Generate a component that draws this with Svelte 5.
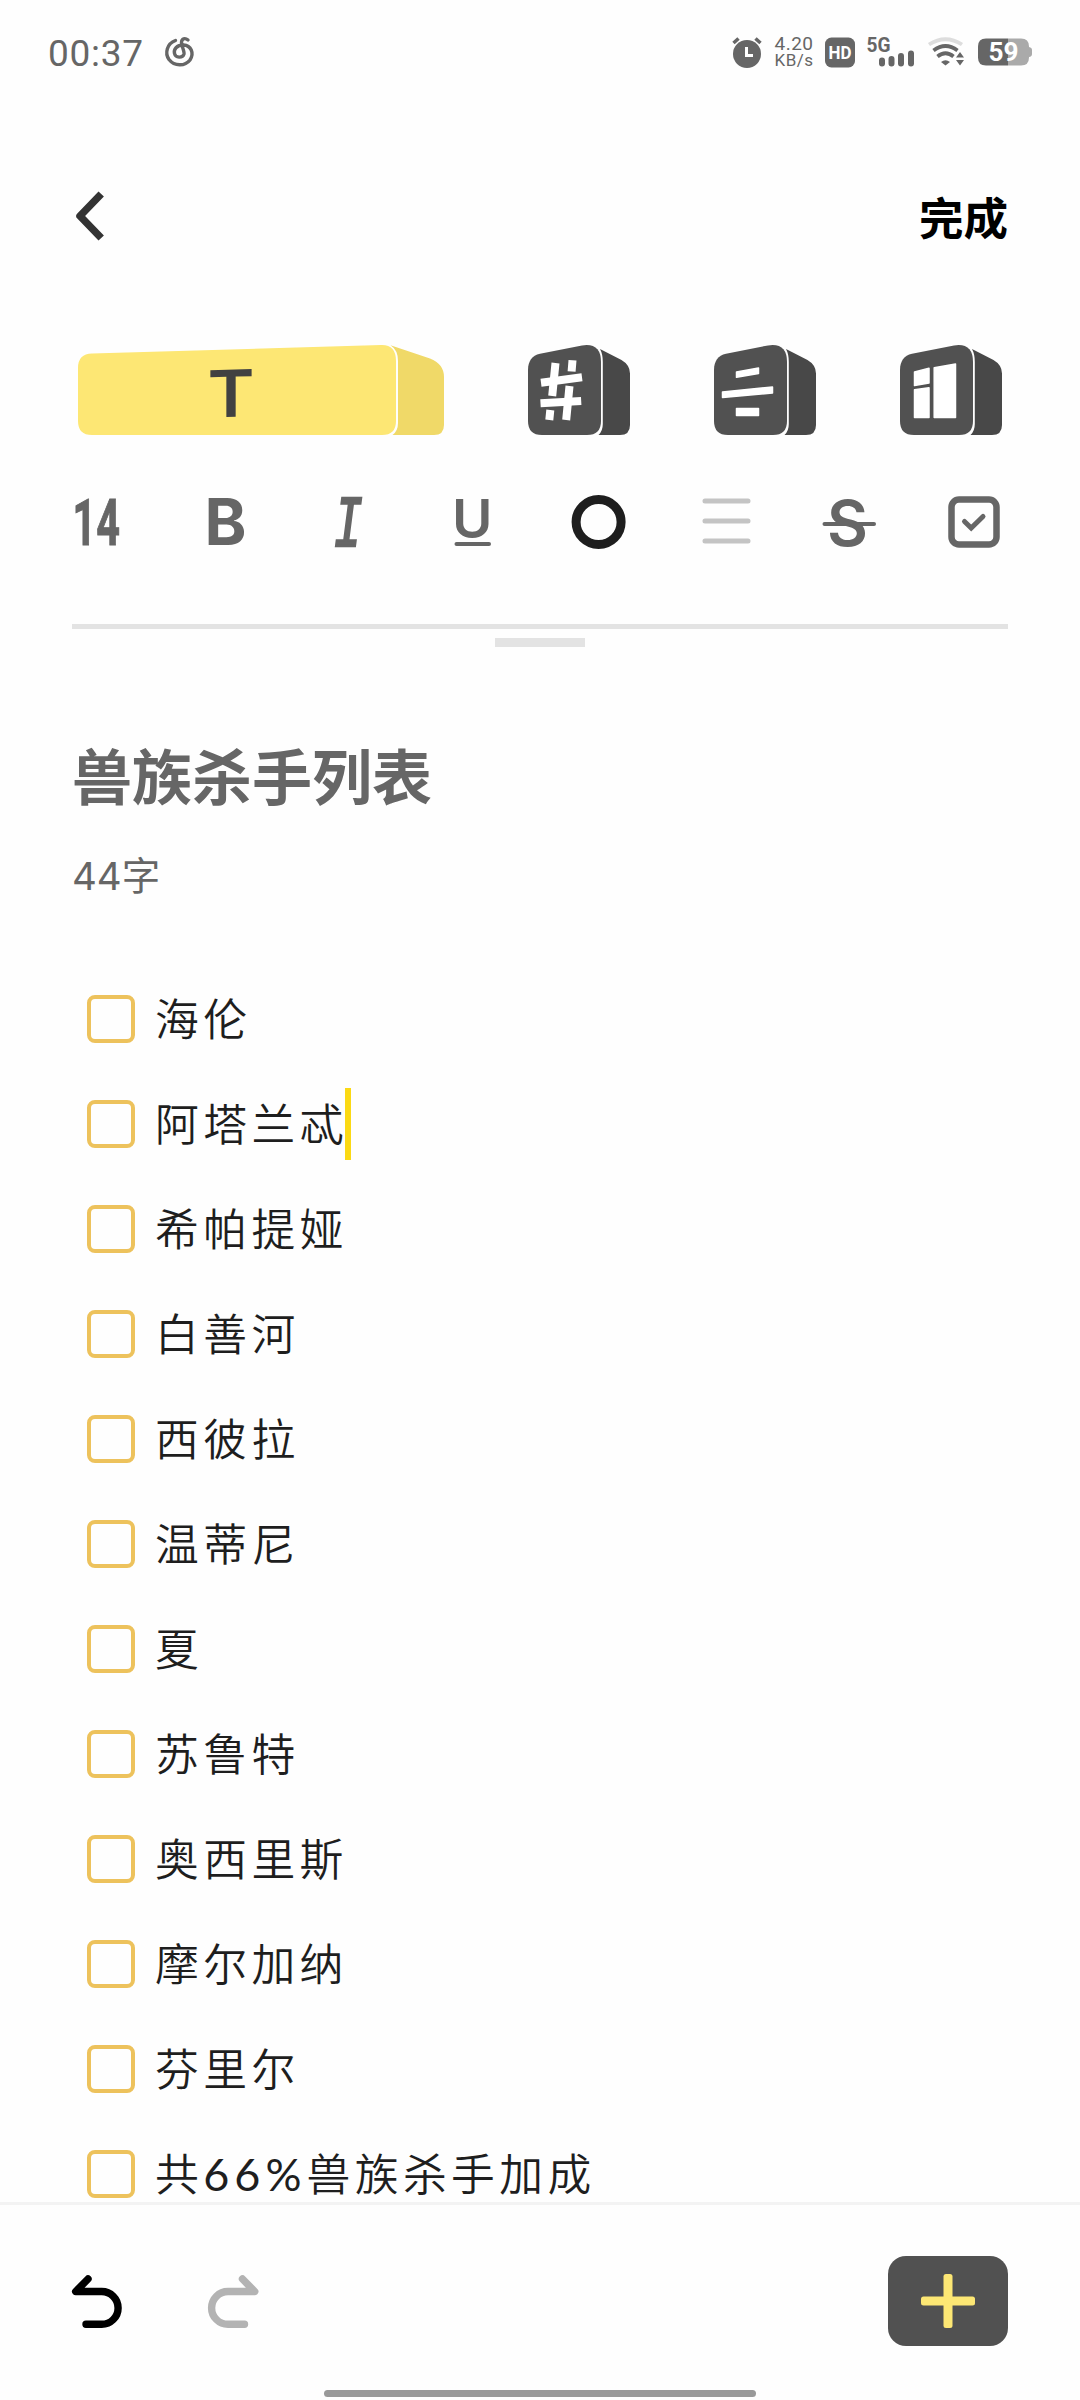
<script lang="ts">
  type Item = { text: string; done: boolean };

  const title = '兽族杀手列表';
  const wordCount = 44;
  const cursorAt = 1;

  let items: Item[] = $state(
    [
      '海伦', '阿塔兰忒', '希帕提娅', '白善河', '西彼拉', '温蒂尼',
      '夏', '苏鲁特', '奥西里斯', '摩尔加纳', '芬里尔', '共66%兽族杀手加成'
    ].map((text) => ({ text, done: false }))
  );

  function toggle(i: number) {
    items[i].done = !items[i].done;
  }

  // numbers are set in their own face, so cut them out of the text
  function parts(text: string) {
    return text.split(/([\d%]+)/).filter(Boolean);
  }
</script>

{#snippet cube()}
  <path class="face" d="M0 26Q0 12.5 12 9.7L54 1.4Q73 -1.5 73 18V77Q73 91 59 91H14Q0 91 0 77Z" />
  <path class="side" d="M72 5L93.500 16Q102 21 102 29.500V81Q102 91 92 91H70.500Q74.800 87 74.800 80V18Q74.800 10 72 5Z" />
{/snippet}

<div class="screen">
  <div class="status">
    <span class="clock">00:37</span>
    <svg class="music" width="30" height="32" viewBox="0 0 30 32">
      <path d="M10.500 4.500C2 7.500 -0.500 17 4 23.500C9.500 30.500 20 30.500 25 24C29.500 17 26 9.500 18.500 9C11.500 9 8.500 13.500 9.500 17.500C10.500 22 17.500 22.500 19 18C19.600 15.500 16.500 10 16.500 6.500C16.500 2.500 20 1.500 23 4" />
    </svg>
    <svg class="alarm" width="30" height="31" viewBox="0 0 30 31">
      <circle cx="15" cy="17" r="14" fill="#666" />
      <path d="M1.500 6L6.500 1.500M28.500 6L23.500 1.500" stroke="#666" stroke-width="3.500" />
      <path d="M14.500 10V18.500H21" fill="none" stroke="#fff" stroke-width="3" />
    </svg>
    <div class="speed"><span>4.20</span><span class="unit">KB/s</span></div>
    <svg class="hd" width="30" height="31" viewBox="0 0 30 31">
      <rect width="30" height="30" y="0.500" rx="6.500" fill="#666" />
      <text x="3.500" y="22" textLength="23" lengthAdjust="spacingAndGlyphs">HD</text>
    </svg>
    <svg class="signal" width="48" height="32" viewBox="0 0 48 32">
      <text x="-0.500" y="15.500" textLength="24" lengthAdjust="spacingAndGlyphs">5G</text>
      <path d="M15 24.500V27.500M24.500 23V27.500M34 20V27.500M44 17.500V27.500" />
    </svg>
    <svg class="wifi" width="37" height="30" viewBox="0 0 37 30">
      <path d="M1 7.500Q17.500 -3 34 7.500" stroke="#ddd" />
      <path d="M5.500 13.500Q17.500 4.500 29.500 13.500" />
      <path d="M9.500 19.500Q17.500 13 25.500 19.500" />
      <path d="M13 25Q17.500 21.500 22 25L17.500 28.500Z" fill="#666" stroke="none" />
      <path d="M32 15L36 20.500H28ZM32 28.500L36 23H28Z" fill="#666" stroke="none" />
    </svg>
    <svg class="battery" width="54" height="28" viewBox="0 0 54 28">
      <path d="M8 0.500H30V27.500H8Q0 27.500 0 19.500V8.500Q0 0.500 8 0.500Z" fill="#666" />
      <path d="M30 0.500H43Q51 0.500 51 8.500V9Q54 9.500 54 12V16Q54 18.500 51 19V19.500Q51 27.500 43 27.500H30Z" fill="#aaa" />
      <text x="10.500" y="23" textLength="30" lengthAdjust="spacingAndGlyphs">59</text>
    </svg>
  </div>

  <header class="header">
    <button class="plain" aria-label="back">
      <svg width="36" height="52" viewBox="0 0 36 52">
        <path d="M29.200 4L8 26L29.200 48" fill="none" stroke="#333" stroke-width="7.500" stroke-linejoin="round" />
      </svg>
    </button>
    <button class="plain finish">完成</button>
  </header>

  <nav class="tabs">
    <svg class="tab wide" width="366" height="92" viewBox="0 0 366 92">
      <path class="face" d="M0 24Q0 10 14 9.600L303 1.100Q318 0.500 318 17V77Q318 91 304 91H14Q0 91 0 77Z" />
      <path class="side" d="M312.500 1.300L352 14.500Q366 20 366 33V81Q366 91 356 91H314.500Q320 87 320 79V17Q320 6 312.500 1.300Z" />
      <text x="129.500" y="73" textLength="47" lengthAdjust="spacingAndGlyphs" transform="skewY(-1.500)" transform-origin="153 73">T</text>
    </svg>
    <svg class="tab" width="102" height="92" viewBox="0 0 102 92">
      {@render cube()}
      <path class="hash" d="M27.500 19L24.200 52M44.500 16.300L43.600 27.500M41.500 42L38.200 76M22.300 66L21.300 76" />
      <path class="hash" d="M13 38.700L54 33.300M12.500 59.300L53.200 57" />
    </svg>
    <svg class="tab" width="102" height="92" viewBox="0 0 102 92">
      {@render cube()}
      <path class="glyph" d="M22.500 28L44.500 24V29.500L22.500 33.300ZM8.500 48L58.500 43V49L8.500 53.500ZM22.500 64.500H44.500V71.500H22.500Z" />
    </svg>
    <svg class="tab" width="102" height="92" viewBox="0 0 102 92">
      {@render cube()}
      <path class="glyph" d="M14.500 28L29 24.300V39L14.500 41.500ZM14.500 45.800L29 43.800V73.500H14.500ZM34.200 23.800L55.500 20V73.500H34.200Z" />
    </svg>
  </nav>

  <div class="formats">
    <svg viewBox="0 0 60 60">
      <text class="size" x="3.500" y="53" textLength="47.500" lengthAdjust="spacingAndGlyphs">14</text>
    </svg>
    <svg viewBox="0 0 60 60">
      <text class="bold" x="10.500" y="53" textLength="42" lengthAdjust="spacingAndGlyphs">B</text>
    </svg>
    <svg viewBox="0 0 60 60">
      <text class="italic" x="14.500" y="54" textLength="29" lengthAdjust="spacingAndGlyphs">I</text>
    </svg>
    <svg viewBox="0 0 60 60">
      <text class="under" x="8" y="45.500" textLength="40.500" lengthAdjust="spacingAndGlyphs">U</text>
      <path d="M12.500 52H45" stroke="#666" stroke-width="4" stroke-linecap="round" />
    </svg>
    <svg viewBox="0 0 60 60">
      <circle cx="29.600" cy="30" r="22.500" fill="none" stroke="#1e1e1e" stroke-width="9" />
    </svg>
    <svg viewBox="0 0 60 60">
      <path d="M10 9H53M10 29H53M10 49H53" stroke="#c4c4c4" stroke-width="5" stroke-linecap="round" />
    </svg>
    <svg viewBox="0 0 60 60">
      <text class="strike" x="7" y="54" textLength="41" lengthAdjust="spacingAndGlyphs">S</text>
      <path d="M4.500 32H54" stroke="#666" stroke-width="4" stroke-linecap="round" />
    </svg>
    <svg viewBox="0 0 60 60">
      <rect x="6.500" y="7.500" width="45" height="45" rx="7.500" fill="none" stroke="#666" stroke-width="6.500" />
      <path d="M19.500 29.500L26.200 36L38 24.500" fill="none" stroke="#666" stroke-width="5" stroke-linecap="round" />
    </svg>
  </div>

  <div class="divider"></div>
  <div class="handle"></div>

  <main class="note">
    <h1>{title}</h1>
    <p class="count">{wordCount}字</p>
    <ul>
      {#each items as item, i}
        <li>
          <button class="box" class:done={item.done} aria-label={item.text} onclick={() => toggle(i)}></button>
          <span class="text">{#each parts(item.text) as part}<span class:number={/\d/.test(part)}>{part}</span>{/each}</span>
          {#if i === cursorAt}<span class="cursor"></span>{/if}
        </li>
      {/each}
    </ul>
  </main>

  <footer class="footer">
    <svg width="52" height="56" viewBox="0 0 52 56">
      <path class="arrow" d="M16 6L3.700 18.500H29.700A16.400 16.400 0 0 1 29.700 51.300H14" />
    </svg>
    <svg class="redo" width="52" height="56" viewBox="0 0 52 56">
      <path class="arrow" d="M36.500 6L48.700 18.500H22A16.400 16.400 0 0 0 22 51.300H38.500" />
    </svg>
    <button class="add" aria-label="add">
      <svg width="54" height="54" viewBox="0 0 54 54" fill="#fde774">
        <rect x="22.500" width="9" height="54" rx="2.500" />
        <rect y="22.500" width="54" height="9" rx="2.500" />
      </svg>
    </button>
  </footer>
  <div class="home"></div>
</div>

<style>
  :global(body) {
    background: #fefefe;
  }

  .screen {
    width: 1080px;
    height: 2400px;
    display: flex;
    flex-direction: column;
    overflow: hidden;
    background: #fefefe;
    color: #666;
    font-family: Roboto, 'Noto Sans CJK SC', sans-serif;
  }

  svg {
    display: block;
    flex: none;
    overflow: visible;
  }

  button {
    padding: 0;
    border: none;
    background: none;
    font-family: inherit;
    cursor: pointer;
  }

  .status {
    height: 104px;
    box-sizing: border-box;
    display: flex;
    align-items: center;
    padding: 0 48px;
  }

  .clock {
    width: 117px;
    font-size: 37px;
    line-height: 40px;
    letter-spacing: 0.7px;
    margin-top: 3px;
  }

  .music path {
    fill: none;
    stroke: #666;
    stroke-width: 3.4;
    stroke-linecap: round;
  }

  .alarm { margin-left: auto; }

  .speed {
    width: 42px;
    margin: 0 10px 0 11px;
    display: flex;
    flex-direction: column;
    align-items: center;
    font-size: 19px;
    line-height: 17px;
    letter-spacing: 0.5px;
  }

  .unit { font-size: 17px; }

  .status text {
    font-weight: 700;
    font-family: Roboto, sans-serif;
  }

  .hd text { fill: #fff; font-size: 19px; }
  .signal { margin-left: 12px; }
  .signal text { fill: #666; font-size: 21px; }
  .signal path { stroke: #666; stroke-width: 6; stroke-linecap: round; }

  .wifi {
    margin: 0 13px;
    fill: none;
    stroke: #666;
    stroke-width: 3.800;
  }

  .battery text { fill: #fff; font-size: 25px; }

  .header {
    height: 228px;
    box-sizing: border-box;
    display: flex;
    justify-content: space-between;
    align-items: center;
    padding: 0 72px 4px;
  }

  .finish {
    margin-top: -2px;
    font-size: 44.5px;
    font-weight: 700;
    color: #000;
  }

  .tabs {
    display: flex;
    justify-content: space-between;
    padding: 12px 78px 0;
  }

  .tab .face { fill: #515151; }
  .tab .side { fill: #484848; }
  .wide .face { fill: #fde774; }
  .wide .side { fill: #f0d968; }

  .wide text {
    fill: #414141;
    font: 600 65px Inter, sans-serif;
  }

  .hash {
    fill: none;
    stroke: #fff;
    stroke-width: 8;
  }

  .glyph {
    fill: #fff;
    stroke: #fff;
    stroke-width: 1.500;
    stroke-linejoin: round;
  }

  .formats {
    display: grid;
    grid-template-columns: repeat(8, 125.2px);
    justify-items: center;
    margin: 56px 0 72px 36px;
  }

  .formats svg {
    width: 60px;
    height: 60px;
  }

  .formats text { fill: #666; }
  .formats .size {
    font: 700 65px Roboto, sans-serif;
    stroke: #666;
    stroke-width: 1;
  }
  .bold { font: 700 64px Inter, sans-serif; }
  .formats .italic {
    font: italic 400 72px 'Liberation Mono', monospace;
    stroke: #666;
    stroke-width: 2.5;
  }
  .under { font: 600 54px Inter, sans-serif; }
  .strike { font: 600 63px Inter, sans-serif; }

  .divider {
    height: 5px;
    flex: none;
    margin: 0 72px;
    background: #e3e3e3;
  }

  .handle {
    width: 90px;
    height: 9px;
    flex: none;
    margin: 9px auto 0;
    background: #e3e3e3;
  }

  .note {
    flex: 1;
    min-height: 0;
    overflow: hidden;
    padding: 0 72px;
  }

  h1 {
    margin: 88px 0 0;
    font-size: 60px;
    font-weight: 600;
    line-height: 90px;
  }

  .count {
    margin: 21px 0 0;
    font-family: Inter, 'Noto Sans CJK SC', sans-serif;
    font-weight: 380;
    font-size: 38.5px;
    line-height: 60px;
  }

  ul {
    margin: 60px 0 0;
    padding: 0 0 0 15px;
    list-style: none;
  }

  li {
    height: 105px;
    display: flex;
    align-items: center;
  }

  .box {
    width: 48px;
    height: 48px;
    box-sizing: border-box;
    flex: none;
    margin-right: 20px;
    border: 4px solid #edc25c;
    border-radius: 8px;
  }

  .done { background: #edc25c; }

  .text {
    margin-top: 1px;
    font-family: Lato, 'Noto Sans CJK SC', sans-serif;
    font-weight: 350;
    font-size: 43.8px;
    letter-spacing: 4.4px;
    line-height: 60px;
    color: #1e1e1e;
  }

  .number {
    font-weight: 400;
    font-size: 45px;
    letter-spacing: 5px;
  }

  .cursor {
    width: 6px;
    height: 72px;
    margin: 1px 0 0 -3px;
    background: #fbd914;
  }

  .footer {
    height: 183px;
    box-sizing: border-box;
    flex: none;
    display: flex;
    align-items: center;
    padding: 12px 72px 0;
    border-top: 3px solid #f3f3f3;
  }

  .redo { margin-left: 82px; }

  .arrow {
    fill: none;
    stroke: #000;
    stroke-width: 7.400;
    stroke-linecap: round;
    stroke-linejoin: round;
  }

  .redo .arrow { stroke: #b3b3b3; }

  .add {
    width: 120px;
    height: 90px;
    margin-left: auto;
    display: flex;
    justify-content: center;
    align-items: center;
    border-radius: 18px;
    background: #515151;
  }

  .home {
    width: 432px;
    height: 7px;
    flex: none;
    margin: 5px auto 3px;
    border-radius: 4px;
    background: #999;
  }
</style>
